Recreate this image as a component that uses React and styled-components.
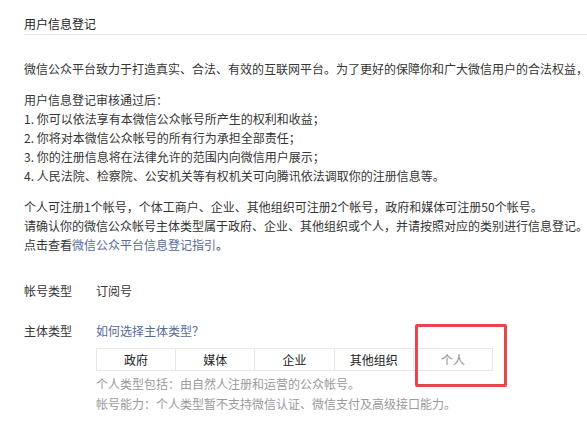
import React from "react";
import styled, { createGlobalStyle } from "styled-components";

const Global = createGlobalStyle`
  html, body {
    margin: 0;
    background: #fff;
    overflow: hidden;
  }
  body {
    font-family: "Noto Sans CJK SC", "Noto Sans", "Liberation Sans", sans-serif;
    font-size: 12px;
    color: #353535;
  }
`;

const Page = styled.div`
  width: 587px;
  height: 422px;
  padding-left: 24px;
  box-sizing: border-box;
  overflow: hidden;
`;

const Header = styled.div`
  padding: 14px 0 1px;
  line-height: 19px;
  border-bottom: 1px solid #e7e7eb;
  color: #222;
`;

const Body = styled.div`
  padding-top: 24px;
  line-height: 19px;
  white-space: nowrap;
`;

const Para = styled.p`
  margin: 0 0 12px;
`;

const Link = styled.a`
  color: #576b95;
  text-decoration: none;
`;

const Form = styled.div`
  padding-top: 15px;
`;

const Row = styled.div`
  display: flex;
  line-height: 19px;
  margin-bottom: ${(p) => p.$gap || 0}px;
`;

const Label = styled.div`
  width: 72px;
  flex: none;
  color: #353535;
`;

const Field = styled.div`
  display: flex;
  flex-direction: column;
`;

const Segments = styled.div`
  position: relative;
  display: flex;
  width: 397px;
  height: 23px;
  margin-top: 8px;
  border: 1px solid #e4e8eb;
  box-sizing: border-box;
`;

const Segment = styled.div`
  flex: 1;
  display: flex;
  align-items: center;
  justify-content: center;
  color: ${(p) => (p.$muted ? "#8d8d8d" : "#222")};
  & + & {
    border-left: 1px solid #e4e8eb;
  }
`;

const Highlight = styled.div`
  position: absolute;
  left: 318px;
  top: -25px;
  width: 92px;
  height: 63px;
  border: 3px solid #e5474d;
  border-radius: 2px;
  box-sizing: border-box;
`;

const Hints = styled.div`
  margin-top: 3px;
  line-height: 20px;
  color: #9a9a9a;
`;

const types = ["政府", "媒体", "企业", "其他组织", "个人"];

export default function App() {
  return (
    <Page>
      <Global />
      <Header>用户信息登记</Header>
      <Body>
        <Para>
          微信公众平台致力于打造真实、合法、有效的互联网平台。为了更好的保障你和广大微信用户的合法权益，
        </Para>
        <Para>
          用户信息登记审核通过后：
          <br />
          1. 你可以依法享有本微信公众帐号所产生的权利和收益；
          <br />
          2. 你将对本微信公众帐号的所有行为承担全部责任；
          <br />
          3. 你的注册信息将在法律允许的范围内向微信用户展示；
          <br />
          4. 人民法院、检察院、公安机关等有权机关可向腾讯依法调取你的注册信息等。
        </Para>
        <Para>
          个人可注册1个帐号，个体工商户、企业、其他组织可注册2个帐号，政府和媒体可注册50个帐号。
          <br />
          请确认你的微信公众帐号主体类型属于政府、企业、其他组织或个人，并请按照对应的类别进行信息登记。
          <br />
          点击查看<Link href="#">微信公众平台信息登记指引</Link>。
        </Para>
      </Body>
      <Form>
        <Row $gap={21}>
          <Label>帐号类型</Label>
          <div>订阅号</div>
        </Row>
        <Row>
          <Label>主体类型</Label>
          <Field>
            <Link href="#">如何选择主体类型？</Link>
            <Segments>
              {types.map((t) => (
                <Segment key={t} $muted={t === "个人"}>
                  {t}
                </Segment>
              ))}
              <Highlight />
            </Segments>
            <Hints>
              个人类型包括：由自然人注册和运营的公众帐号。
              <br />
              帐号能力：个人类型暂不支持微信认证、微信支付及高级接口能力。
            </Hints>
          </Field>
        </Row>
      </Form>
    </Page>
  );
}
